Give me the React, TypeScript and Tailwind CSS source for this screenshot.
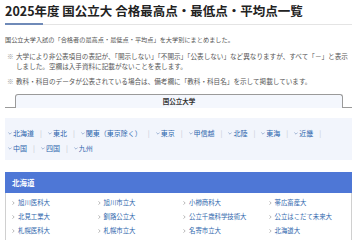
const regionsRow1 = ["北海道", "東北", "関東（東京除く）", "東京", "甲信越", "北陸", "東海", "近畿"];
const regionsRow2 = ["中国", "四国", "九州"];

const universities = [
  "旭川医科大",
  "旭川市立大",
  "小樽商科大",
  "帯広畜産大",
  "北見工業大",
  "釧路公立大",
  "公立千歳科学技術大",
  "公立はこだて未来大",
  "札幌医科大",
  "札幌市立大",
  "名寄市立大",
  "北海道大",
];

function DownChevron() {
  return (
    <svg viewBox="0 0 6 4" className="w-[4px] h-[3px] mr-[1px] shrink-0" fill="none" stroke="#5b7fb3" strokeWidth="0.8">
      <path d="M0.5 0.5 L3 3 L5.5 0.5" />
    </svg>
  );
}

function RightChevron() {
  return (
    <svg viewBox="0 0 4 6" className="w-[3px] h-[4px] mr-[3px] shrink-0" fill="none" stroke="#777" strokeWidth="0.8">
      <path d="M0.5 0.5 L3 3 L0.5 5.5" />
    </svg>
  );
}

function RegionRow({ items, trailing }: { items: string[]; trailing: boolean }) {
  return (
    <div className="flex items-center leading-[15px]">
      {items.map((name, i) => (
        <div key={name} className="flex items-center">
          <DownChevron />
          <span className="text-[#2f67ad]">{name}</span>
          {(trailing || i < items.length - 1) && (
            <span className="text-[#c4c8d0] mx-[6px]">|</span>
          )}
        </div>
      ))}
    </div>
  );
}

export default function App() {
  return (
    <div
      className="w-[359px] h-[240px] overflow-hidden bg-white pl-[5px] pr-[7px]"
      style={{ fontFamily: '"Noto Sans CJK JP", "Noto Sans", sans-serif' }}
    >
      <h1 className="pt-[3px] text-[12.5px] leading-[16px] font-bold text-[#222] whitespace-nowrap">
        2025年度 国公立大 合格最高点・最低点・平均点一覧
      </h1>
      <div className="mt-[4px] flex items-end">
        <div className="w-[38px] h-[2px] bg-[#6f8ab8]" />
        <div className="flex-1 h-px bg-[#e4e4e4]" />
      </div>

      <p className="mt-[10px] text-[6.2px] leading-[10px] text-[#555] whitespace-nowrap">
        国公立大学入試の「合格者の最高点・最低点・平均点」を大学別にまとめました。
      </p>

      <ul className="mt-[6px] text-[6.6px] leading-[10px] text-[#555]">
        <li className="flex">
          <span className="w-[11px] pl-[2px] text-[#999] shrink-0">※</span>
          <span className="whitespace-nowrap">
            大学により非公表項目の表記が、「開示しない」「不開示」「公表しない」など異なりますが、すべて「－」と表示
            <br />
            しました。空欄は入手資料に記載がないことを表します。
          </span>
        </li>
        <li className="flex mt-[5px]">
          <span className="w-[11px] pl-[2px] text-[#999] shrink-0">※</span>
          <span className="whitespace-nowrap">
            教科・科目のデータが公表されている場合は、備考欄に「教科・科目名」を示して掲載しています。
          </span>
        </li>
      </ul>

      <div className="mt-[8px] flex h-[14px]">
        <div className="w-[10px] border-b border-[#9a9a9a]" />
        <div className="flex-1 flex items-center justify-center border border-b-0 border-[#9a9a9a] rounded-t-[3px] bg-[#f4f7fd] text-[6.5px] font-bold text-[#333]">
          国公立大学
        </div>
        <div className="w-[9px] border-b border-[#9a9a9a]" />
      </div>

      <div className="mt-[10px] bg-[#f2f5fc] pt-[8px] pb-[4px] pl-[3px] text-[7px]">
        <RegionRow items={regionsRow1} trailing />
        <RegionRow items={regionsRow2} trailing={false} />
      </div>

      <div className="mt-[12px] h-[21px] bg-[#4e77d6] flex items-center pl-[7px] text-[7.5px] font-bold text-white">
        北海道
      </div>
      <div className="border-x border-[#d0d0d0] pl-[6px] pt-[3px] pb-[4px] grid grid-cols-[repeat(4,85.5px)] text-[6.4px] leading-[14px]">
        {universities.map((u) => (
          <div key={u} className="flex items-center whitespace-nowrap">
            <RightChevron />
            <span className="text-[#2f67ad]">{u}</span>
          </div>
        ))}
      </div>
    </div>
  );
}
